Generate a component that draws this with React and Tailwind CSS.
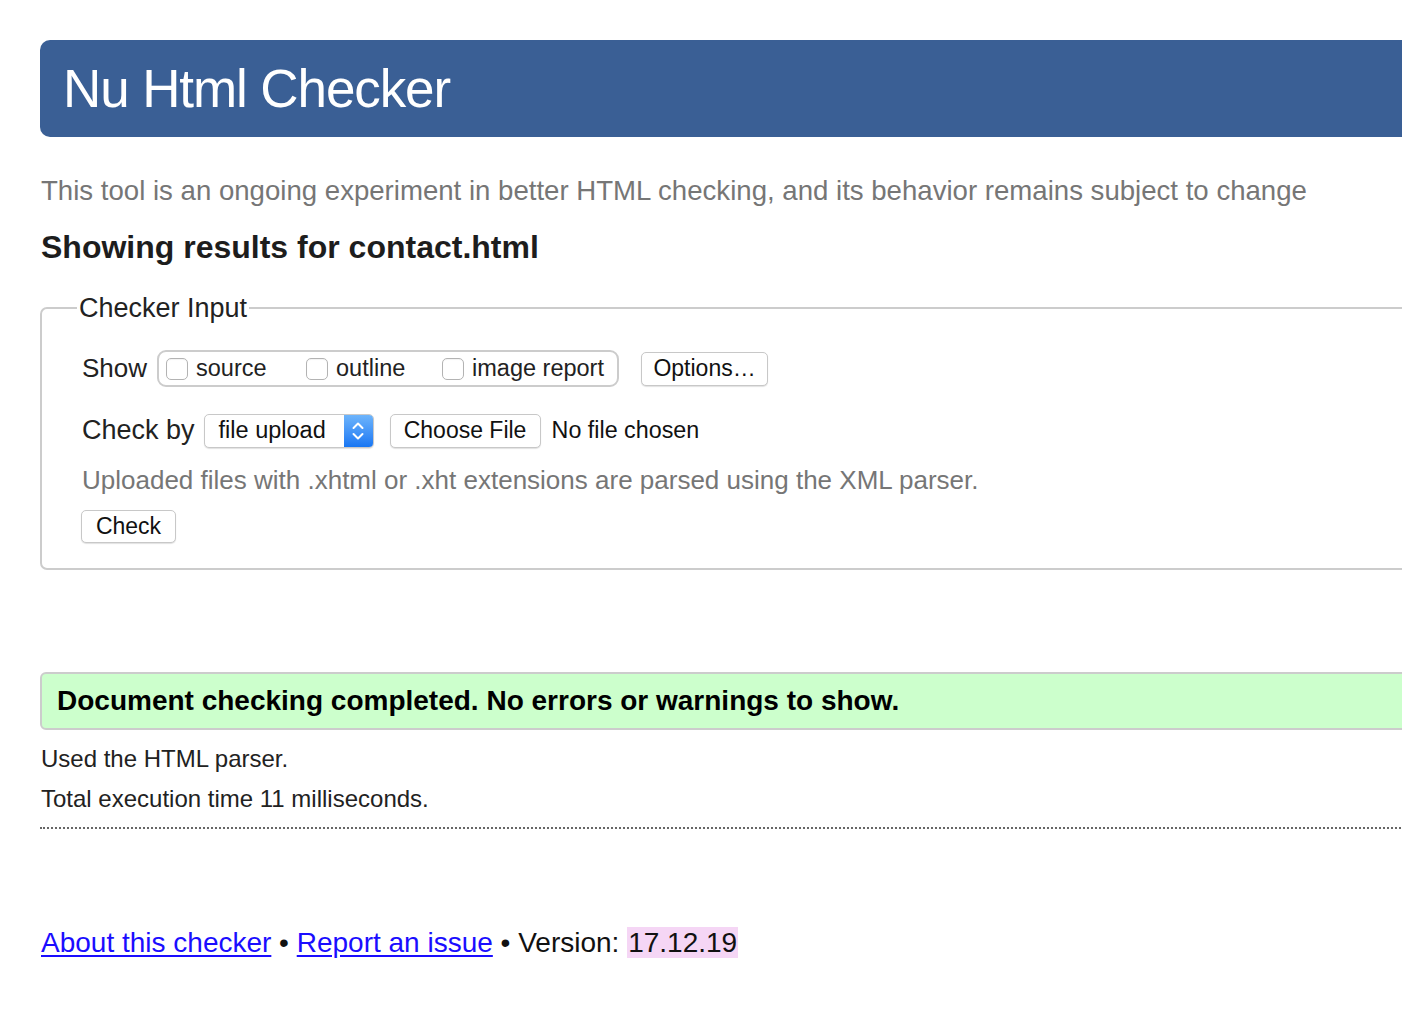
import React from "react";

const Btn = ({ children, className = "" }) => (
  <button
    type="button"
    className={`flex items-center justify-center rounded-[5px] border border-[#c8c8c8] bg-white text-[23px] text-[#111] shadow-[0_1px_1px_rgba(0,0,0,0.12)] ${className}`}
  >
    {children}
  </button>
);

const Box = () => (
  <span className="block h-[22px] w-[22px] shrink-0 rounded-[5px] border border-[#b3b3b3] bg-white shadow-[inset_0_1px_1px_rgba(0,0,0,0.05)]" />
);

const Opt = ({ label, className = "" }) => (
  <span className={`flex items-center ${className}`}>
    <Box />
    <span className="ml-2">{label}</span>
  </span>
);

const App = () => {
  return (
    <div
      className="min-h-screen overflow-hidden bg-white text-[#222]"
      style={{ fontFamily: '"Liberation Sans", Arial, sans-serif' }}
    >
      <div className="ml-10 mr-[-30px] pt-10">
        {/* header */}
        <div className="flex h-[97px] items-center rounded-[10px] bg-[#3a5f95] pl-[23px]">
          <h1 className="text-[53px] leading-none tracking-[-1.1px] text-white">Nu Html Checker</h1>
        </div>

        <p className="mt-[38px] ml-px text-[27.6px] leading-[32px] text-[#767676]">
          This tool is an ongoing experiment in better HTML checking, and its behavior remains subject to change
        </p>
        <h2 className="mt-[21px] ml-px text-[32px] font-bold leading-[38px] text-[#1d1d1d]">
          Showing results for contact.html
        </h2>

        {/* checker input */}
        <fieldset className="mt-[27px] rounded-[7px] border-2 border-[#cccccc] pb-[25px] pl-10 pt-[27px]">
          <legend className="-ml-[5px] px-[2px] text-[27px] leading-[30px] text-[#222]">Checker Input</legend>

          <div className="flex h-[37px] items-center">
            <span className="text-[26px] text-[#222]">Show</span>
            <div className="ml-[10px] flex h-[37px] w-[462px] items-center rounded-[9px] border-2 border-[#cccccc] pl-[7px] text-[23.5px] text-[#222]">
              <Opt label="source" className="w-[140px]" />
              <Opt label="outline" className="w-[136px]" />
              <Opt label="image report" />
            </div>
            <Btn className="ml-[22px] h-[34px] w-[127px]">Options…</Btn>
          </div>

          <div className="mt-[26px] flex h-[35px] items-center">
            <span className="text-[27px] text-[#222]">Check by</span>
            <div className="ml-[9px] flex h-[34px] w-[170px] items-stretch overflow-hidden rounded-[5px] border border-[#c8c8c8] bg-white shadow-[0_1px_1px_rgba(0,0,0,0.12)]">
              <span className="flex flex-1 items-center pl-[14px] text-[23.5px] text-[#111]">file upload</span>
              <span className="flex w-[29px] items-center justify-center bg-gradient-to-b from-[#6db4fb] to-[#1676f3]">
                <svg width="14" height="22" viewBox="0 0 14 22" fill="none" stroke="white" strokeWidth="2" strokeLinecap="round" strokeLinejoin="round">
                  <path d="M2.5 8 L7 3.5 L11.5 8" />
                  <path d="M2.5 14 L7 18.5 L11.5 14" />
                </svg>
              </span>
            </div>
            <Btn className="ml-4 h-[34px] w-[151px]">Choose File</Btn>
            <span className="ml-[11px] text-[23.3px] text-[#111]">No file chosen</span>
          </div>

          <p className="mt-[17px] text-[26px] leading-[30px] text-[#767676]">
            Uploaded files with .xhtml or .xht extensions are parsed using the XML parser.
          </p>

          <Btn className="mt-[15px] -ml-px h-[33px] w-[95px]">Check</Btn>
        </fieldset>

        {/* result */}
        <div className="mt-[102px] flex h-[58px] items-center rounded-[6px] border-2 border-[#cccccc] bg-[#ccffcc] pl-[15px]">
          <p className="text-[28px] font-bold text-black">Document checking completed. No errors or warnings to show.</p>
        </div>

        <p className="mt-[14px] ml-px text-[24px] leading-[30px] text-[#222]">Used the HTML parser.</p>
        <p className="mt-[10px] ml-px text-[24px] leading-[30px] text-[#222]">Total execution time 11 milliseconds.</p>

        <div className="mt-[13px] border-t-2 border-dotted border-[#666]" />

        <p className="mt-[97px] ml-px text-[28px] leading-[34px] text-[#111]">
          <a href="#" className="text-[#1a0dff] underline underline-offset-[3px]">About this checker</a>
          {" • "}
          <a href="#" className="text-[#1a0dff] underline underline-offset-[3px]">Report an issue</a>
          {" • Version: "}
          <span className="bg-[#f5d6f5] px-px">17.12.19</span>
        </p>
      </div>
    </div>
  );
};

export default App;
